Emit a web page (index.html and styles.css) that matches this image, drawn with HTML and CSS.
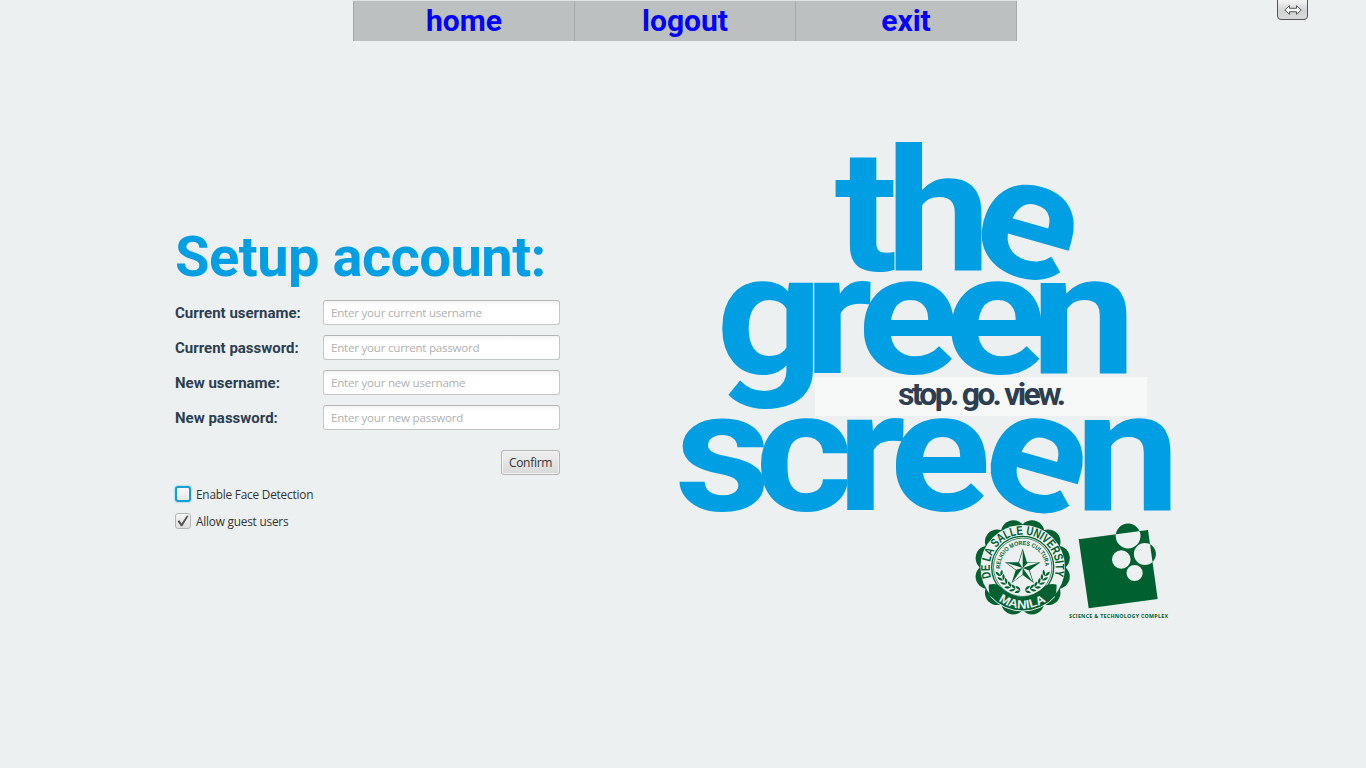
FILE: index.html
```html
<!DOCTYPE html>
<html lang="en">
<head>
<meta charset="utf-8">
<title>The Green Screen - Setup account</title>
<link rel="stylesheet" href="styles.css">
</head>
<body>
<nav class="menu"><a href="#">home</a><a href="#">logout</a><a href="#">exit</a></nav>
<button class="resize" aria-label="Resize"><svg width="18" height="10" viewBox="0 0 18 10"><path d="M.8 5 5.500.7V3.300h7V.7L17.200 5l-4.700 4.300V6.700h-7v2.600z" fill="#fff" stroke="#444" stroke-width=".9"/></svg></button>
<main class="page">
<form class="setup">
<h1>Setup account:</h1>
<div class="fields">
<label for="cu">Current username:</label><input id="cu" placeholder="Enter your current username">
<label for="cp">Current password:</label><input id="cp" placeholder="Enter your current password">
<label for="nu">New username:</label><input id="nu" placeholder="Enter your new username">
<label for="np">New password:</label><input id="np" placeholder="Enter your new password">
</div>
<button type="button" class="confirm">Confirm</button>
<div class="check"><span class="box focus"></span><span class="caption">Enable Face Detection</span></div>
<div class="check"><span class="box"><svg width="14" height="14" viewBox="0 0 14 14"><path d="M1.600 7.400 3.300 6l2.200 3.400L10.900 1.500 12.500 2 6.300 12.300H5z" fill="#555"/></svg></span><span class="caption">Allow guest users</span></div>
</form>
<svg class="logo" width="520" height="510" viewBox="660 120 520 510">
<g class="word">
<text transform="scale(1.1 1)" y="270" x="758.600 805.400">th</text>
<text transform="translate(965.500 260.500) rotate(16) scale(1.1 1)">e</text>
<text transform="scale(1.1 1)" y="373" x="650.900 731 779.500 859 937.300">green</text>
<text transform="scale(1.1 1)" y="510" x="613.300 686.400 760.900 808.600">scre</text>
<text transform="translate(974.500 494) rotate(16) scale(1.1 1)">e</text>
<text transform="scale(1.1 1)" y="510" x="977.300">n</text>
</g>
<rect x="815" y="377" width="332" height="39" fill="#f7f9f9"/>
<text class="tag" x="898" y="405" textLength="168">stop. go. view.</text>
<defs>
<path id="ring" d="M992.300 580.500A33 33 0 1 1 1053.100 580.500"/>
<path id="motto" d="M1000.400 570.500A22.500 22.500 0 1 1 1045 570.500"/>
<path id="city" d="M990 592A40.500 40.500 0 0 0 1055.400 592"/>
<g id="lobes"><circle cx="1032" cy="532.500" r="12.300"/><circle cx="1048.200" cy="541.800" r="12.300"/><circle cx="1057.500" cy="558" r="12.300"/><circle cx="1057.500" cy="576.600" r="12.300"/><circle cx="1048.200" cy="592.800" r="12.300"/><circle cx="1032" cy="602.100" r="12.300"/></g>
<path id="leaf" d="M0 1q-4-1-3.500-5.500q3 1 3.500 5.500q.5-4.500 3.500-5.500q.5 4.500-3.500 5.500z" fill="#00602f"/>
<g id="laurel"><use href="#leaf" transform="translate(1045.200 575) rotate(18)"/><use href="#leaf" transform="translate(1042.700 579.400) rotate(31)"/><use href="#leaf" transform="translate(1039.500 583.400) rotate(44)"/><use href="#leaf" transform="translate(1035.500 586.700) rotate(57)"/><use href="#leaf" transform="translate(1031 589) rotate(70)"/><use href="#leaf" transform="translate(1026 590) rotate(82)"/></g>
</defs>
<g fill="#00602f"><circle cx="1022.700" cy="567.300" r="43"/><use href="#lobes"/><use href="#lobes" transform="matrix(-1 0 0 1 2045.400 0)"/></g>
<circle cx="1022.700" cy="567.300" r="42.300" fill="#ecf0f1"/>
<g fill="none" stroke="#00602f"><circle cx="1022.700" cy="567.300" r="31" stroke-width="1.300"/><circle cx="1022.700" cy="567.300" r="29.200" stroke-width=".7"/></g>
<path d="M989 584.500Q996 583 999 585.500Q1022 608 1046 585.500Q1050 583 1056.500 584.500Q1057 592 1055 596A43 43 0 0 1 990.400 596Q988 590 989 584.500z" fill="#00602f"/>
<path d="M990.500 596.500A43 43 0 0 0 1055 596.500" fill="none" stroke="#ecf0f1" stroke-width="1"/>
<g class="seal">
<text font-size="12.500"><textPath href="#ring" startOffset="3" textLength="122" lengthAdjust="spacingAndGlyphs">DE LA SALLE UNIVERSITY</textPath></text>
<text font-size="6"><textPath href="#motto" startOffset="2" textLength="70" lengthAdjust="spacingAndGlyphs">RELIGIO MORES CULTURA</textPath></text>
<text font-size="12" fill="#ecf0f1"><textPath href="#city" startOffset="12" textLength="51" lengthAdjust="spacingAndGlyphs">MANILA</textPath></text>
</g>
<use href="#laurel"/><use href="#laurel" transform="matrix(-1 0 0 1 2045.400 0)"/>
<path d="M1022.700 548.500 1027 562.200H1040.500L1029.700 570.200 1033.800 583 1022.700 575 1011.600 583 1015.700 570.200 1004.900 562.200H1018.400z" fill="#00602f"/>
<path d="M1022.700 568V550.500L1019 562.500zM1022.700 568 1039 562.500 1028 562.800zM1022.700 568 1032.800 582 1029 570.500zM1022.700 568 1012.400 582 1022.500 574.600zM1022.700 568 1006.500 562.700 1016 569.800z" fill="#ecf0f1"/>
<path fill="#00602f" fill-rule="evenodd" d="M1078.700 539.300 1148 530l9.700 69-69 9.300zM1115.700 536a12.400 12.400 0 1 0 24.800 0a12.400 12.400 0 1 0-24.800 0zM1133.900 554a11 11 0 1 0 22 0a11 11 0 1 0-22 0zM1112 559.500a9.300 9.300 0 1 0 18.600 0a9.300 9.300 0 1 0-18.600 0zM1126.500 573a8.100 8.100 0 1 0 16.200 0a8.100 8.100 0 1 0-16.200 0z"/>
<text class="complex" x="1069" y="618" textLength="99">SCIENCE &amp; TECHNOLOGY COMPLEX</text>
</svg>
</main>
</body>
</html>
```
FILE: styles.css
```css
* { box-sizing: border-box; }
body { margin: 0; width: 1366px; height: 768px; overflow: hidden; background: #ecf0f1; font-family: "Open Sans", "Noto Sans", sans-serif; font-size: 12px; color: #333; }
.menu { display: grid; grid-template-columns: 221px 221px 222px; width: 664px; height: 41px; margin-left: 353px; border-top: 1px solid #dfe3e4; }
.menu a { background: #bcc0c1; border-left: 1px solid #a3a8a9; font: bold 30px/39px Roboto, sans-serif; color: #00f; text-align: center; text-decoration: none; }
.menu a:last-child { border-right: 1px solid #a3a8a9; }
.resize { position: absolute; left: 1277px; top: -4px; width: 31px; height: 24px; padding: 4px 0 0; border: 1px solid #555; border-radius: 4px; background: linear-gradient(#f1f1f1 20%, #d0d3d4 60%, #d8dadb); display: flex; align-items: center; justify-content: center; }
.page { display: flex; align-items: flex-start; padding: 79px 0 0 175px; }
.setup { width: 385px; margin: 104px 100px 0 0; }
h1 { margin: 0; height: 76px; font: bold 56px/66px Roboto, sans-serif; letter-spacing: -.5px; color: #009fe3; white-space: nowrap; }
.fields { display: grid; grid-template-columns: 148px 237px; grid-auto-rows: 25px; row-gap: 10px; align-items: center; }
.fields label { padding-top: 1px; font: bold 15px/25px Roboto, sans-serif; color: #2c3e50; }
.fields input { height: 25px; width: 237px; padding: 0 7px; border: 1px solid #c3c6c7; border-top-color: #b3b6b7; border-radius: 3px; background: linear-gradient(#f3f3f3, #fff 5px); font: 11.6px "Open Sans", sans-serif; letter-spacing: -.24px; outline: 0; }
.fields input::placeholder { color: #b0b0b0; opacity: 1; }
.confirm { display: block; width: 59px; height: 25px; margin: 20px 0 11px auto; padding: 0; border: 1px solid #b3b5b6; border-radius: 3px; background: linear-gradient(#efefef, #d9d9d9); box-shadow: inset 0 0 0 1px #f4f4f4; font: 12px "Open Sans", sans-serif; letter-spacing: -.3px; color: #333; }
.check { display: flex; align-items: center; gap: 5px; height: 16px; margin-bottom: 11px; white-space: nowrap; }
.caption { padding-bottom: 1px; font-size: 11.8px; letter-spacing: -.2px; }
.box { width: 16px; height: 16px; border: 1px solid #b3b5b6; border-radius: 3px; background: linear-gradient(#f5f5f5, #dedede); }
.box svg { display: block; }
.focus { border: 2px solid #159fd0; box-shadow: 0 0 1px 1px #b5e0ef; background: linear-gradient(#f8f8f8, #e8e8e8); }
.logo { display: block; }
.word { font: bold 170.5px Roboto, sans-serif; fill: #009fe3; }
.tag { font: bold 32px Roboto, sans-serif; fill: #2c3e50; }
.seal { font-family: "Liberation Sans", sans-serif; font-weight: bold; fill: #00602f; }
.complex { font: bold 5.3px "Open Sans", sans-serif; fill: #00602f; }
```
